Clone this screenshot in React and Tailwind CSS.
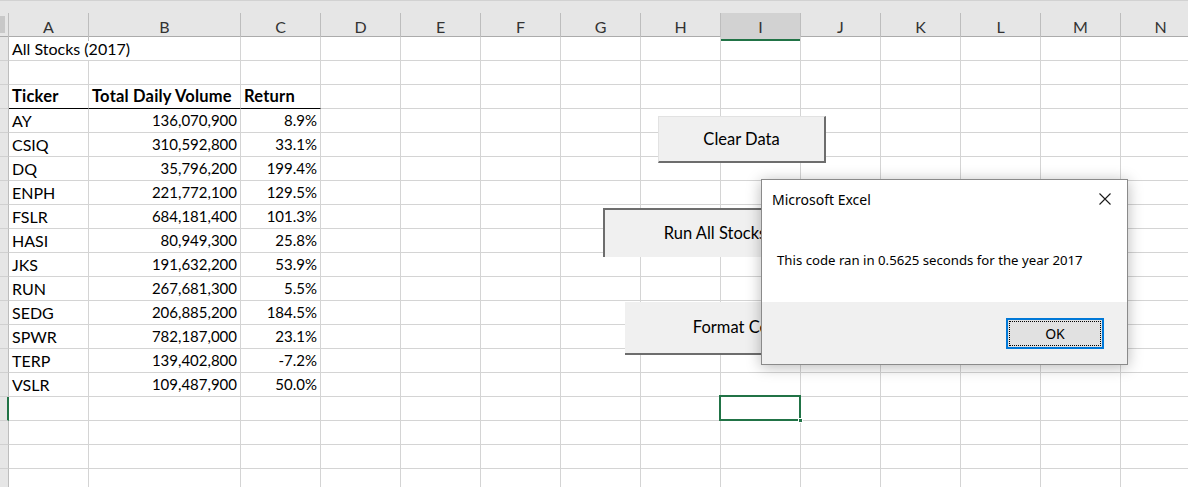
import React from 'react';

const ROW = 'grid grid-cols-[9px_80px_152px_repeat(12,80px)]';
const LETTERS = ['A', 'B', 'C', 'D', 'E', 'F', 'G', 'H', 'I', 'J', 'K', 'L', 'M', 'N'];

const stocks = [
  ['AY', '136,070,900', '8.9%'],
  ['CSIQ', '310,592,800', '33.1%'],
  ['DQ', '35,796,200', '199.4%'],
  ['ENPH', '221,772,100', '129.5%'],
  ['FSLR', '684,181,400', '101.3%'],
  ['HASI', '80,949,300', '25.8%'],
  ['JKS', '191,632,200', '53.9%'],
  ['RUN', '267,681,300', '5.5%'],
  ['SEDG', '206,885,200', '184.5%'],
  ['SPWR', '782,187,000', '23.1%'],
  ['TERP', '139,402,800', '-7.2%'],
  ['VSLR', '109,487,900', '50.0%'],
];

// build the 19 visible rows as arrays of 14 cells
const buildRows = () => {
  const rows = [];
  for (let r = 0; r < 19; r++) rows.push(Array(14).fill(null));
  rows[0][0] = { text: 'All Stocks (2017)', overflow: true };
  rows[2][0] = { text: 'Ticker', bold: true, rule: true };
  rows[2][1] = { text: 'Total Daily Volume', bold: true, rule: true };
  rows[2][2] = { text: 'Return', bold: true, rule: true };
  stocks.forEach(([t, v, ret], i) => {
    rows[3 + i][0] = { text: t };
    rows[3 + i][1] = { text: v, right: true };
    rows[3 + i][2] = { text: ret, right: true };
  });
  return rows;
};

const Cell = ({ cell }) => {
  if (!cell) return <div className="h-[24px] border-r border-b border-[#d4d4d4]" />;
  const size = cell.bold
    ? 'font-bold text-[16.5px] tracking-[0.2px]'
    : cell.right
    ? 'text-[15px]'
    : 'text-[16px]';
  return (
    <div
      className={`h-[24px] flex items-center px-[3px] whitespace-nowrap text-black ${size} ${
        cell.overflow ? 'border-b border-[#d4d4d4] overflow-visible relative z-[1]' : 'border-r border-[#d4d4d4] overflow-hidden'
      } ${cell.rule ? 'border-b border-b-black' : cell.overflow ? '' : 'border-b'} ${
        cell.right ? 'justify-end' : ''
      }`}
    >
      {cell.text}
    </div>
  );
};

const SheetButton = ({ label, className }) => (
  <div
    className={`absolute flex items-center justify-center bg-[#f0f0f0] text-[16.5px] text-black ${className}`}
  >
    {label}
  </div>
);

export default function App() {
  const rows = buildRows();

  return (
    <div className="relative w-[1188px] h-[487px] overflow-hidden bg-white font-['Lato',sans-serif] text-[15px]">
      {/* top strip */}
      <div className="h-[13px] bg-[#e6e6e6] border-t border-[#d2d2d2]" />

      {/* column headers */}
      <div className={`${ROW} h-[24px] bg-[#e6e6e6] border-b border-[#ababab]`}>
        <div className="border-r border-[#bdbdbd] relative">
          <div className="absolute left-0 top-[3px] w-[5px] h-[17px] bg-[#c8c8c8]" />
        </div>
        {LETTERS.map((l) => (
          <div
            key={l}
            className={`flex items-center justify-center border-r border-[#bdbdbd] text-[#333] text-[16px] ${
              l === 'I' ? 'bg-[#d2d2d2] border-b-2 border-b-[#217346] pt-[2px]' : ''
            }`}
          >
            {l}
          </div>
        ))}
      </div>

      {/* sheet rows */}
      {rows.map((cells, r) => (
        <div key={r} className={ROW}>
          <div
            className={`h-[24px] bg-[#e6e6e6] border-b border-[#d0d0d0] ${
              r === 15 ? 'border-r-2 border-r-[#217346]' : 'border-r border-r-[#bdbdbd]'
            }`}
          />
          {cells.map((c, i) => (
            <Cell key={i} cell={c} />
          ))}
        </div>
      ))}

      {/* active cell I16 */}
      <div className="absolute left-[719px] top-[395px] w-[82px] h-[26px] border-2 border-[#217346]">
        <div className="absolute right-[-4px] bottom-[-4px] w-[5px] h-[5px] bg-[#217346] border border-white" />
      </div>

      {/* macro buttons */}
      <SheetButton
        label="Clear Data"
        className="left-[658px] top-[116px] w-[168px] h-[47px] border-t border-l border-[#e2e2e2] border-r-2 border-b-2 border-r-[#6d6d6d] border-b-[#6d6d6d]"
      />
      <SheetButton
        label="Run All Stocks"
        className="left-[603px] top-[208px] w-[222px] h-[49px] border-t-2 border-l-2 border-[#6d6d6d]"
      />
      <SheetButton
        label="Format Cells"
        className="left-[625px] top-[302px] w-[228px] h-[53px] border-b-2 border-r-2 border-[#6d6d6d]"
      />

      {/* message box */}
      <div className="absolute left-[761px] top-[179px] w-[367px] h-[186px] flex flex-col bg-white border border-[#8a8a8a] shadow-[0_2px_14px_rgba(0,0,0,0.28)] font-['Noto_Sans',sans-serif] text-[13.2px] text-black">
        <div className="h-[39px] flex items-center justify-between pl-[10px] pr-[16px]">
          <span className="text-[14px]">Microsoft Excel</span>
          <svg width="12" height="12" viewBox="0 0 12 12" className="mt-[-2px]">
            <path d="M0.5 0.5 L11.5 11.5 M11.5 0.5 L0.5 11.5" stroke="#1a1a1a" strokeWidth="1.1" fill="none" />
          </svg>
        </div>
        <div className="flex-1 pl-[15px] pt-[32px] leading-[18px]">
          This code ran in 0.5625 seconds for the year 2017
        </div>
        <div className="h-[62px] bg-[#f0f0f0] flex items-start justify-end pt-[16px] pr-[23px]">
          <div className="w-[98px] h-[31px] border-2 border-[#0078d7] bg-[#e1e1e1] p-[1px]">
            <div className="w-full h-full border border-dotted border-black flex items-center justify-center text-[14px]">
              OK
            </div>
          </div>
        </div>
      </div>
    </div>
  );
}
